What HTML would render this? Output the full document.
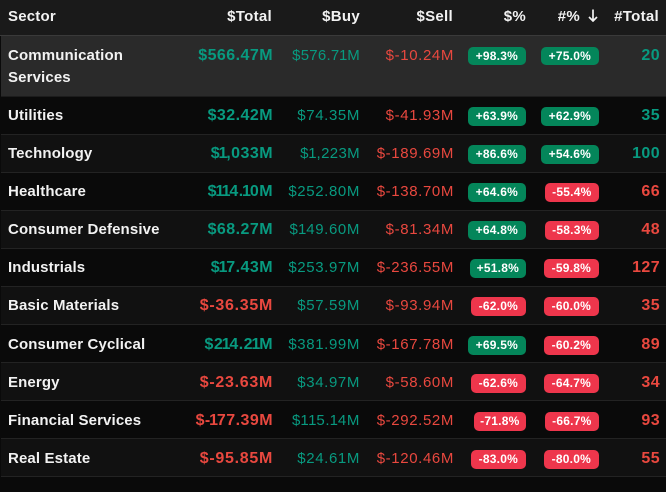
<!DOCTYPE html>
<html><head><meta charset="utf-8"><style>
html,body{margin:0;padding:0;background:#0a0a0a}
#t{position:relative;width:666px;height:492px;overflow:hidden;background:#0a0a0a;font-family:"Liberation Sans",sans-serif;font-size:15px;color:#f2f2f2}
.r{position:absolute;left:1px;right:0;height:37px;border-bottom:1px solid #232323;background:#0a0a0a}
.o{background:#111}
.r span,.h span{position:absolute;white-space:nowrap;line-height:20px;top:9px}
.l span{top:10px}
.n{left:7px;font-weight:700;letter-spacing:.13px}
.a,.b,.c,.d{text-align:right;letter-spacing:.62px}
.a{right:393px;font-weight:700;font-size:16px;letter-spacing:.45px}.b{right:306px}.c{right:212px}
.d{right:6px;font-weight:700;font-size:16px;letter-spacing:.4px}
i{font-style:normal}
.a i{margin-left:-1.6px;letter-spacing:-1.1px}
.b i{margin-left:-.5px;letter-spacing:-.1px}
.g{color:#089a80}.e{color:#e9483f}
.r span.p,.r span.q{top:10px;height:19px;line-height:19px;border-radius:5px;color:#fff;font-weight:700;font-size:12px;text-align:center;padding:0 8px;letter-spacing:.22px}
.l span.p,.l span.q{top:11px !important}
.r span.p{right:140px}.r span.q{right:67px}
.x{background:#04865a}.y{background:#ee364c}
.h{position:absolute;left:0;right:0;top:0;height:35px;background:#1a1a1a;border-bottom:1px solid #3a3a3a;font-weight:700}
.h span{top:7px;letter-spacing:.3px}
.h svg{position:absolute;left:588px;top:9px}
</style></head><body><div id="t">
<div class="h">
<span style="left:8px;letter-spacing:.2px">Sector</span>
<span style="right:394px">$Total</span>
<span style="right:306px">$Buy</span>
<span style="right:213px">$Sell</span>
<span style="right:140px">$%</span>
<span style="right:86px">#%</span>
<svg width="10" height="13" viewBox="0 0 10 13" fill="none" stroke="#f2f2f2" stroke-width="1.7"><path d="M5 0.5V12M1 8L5 12L9 8"/></svg>
<span style="right:7px">#Total</span>
</div>
<div class="r" style="top:36px;height:60px;background:#2a2a2a;border-bottom-color:#1c1c1c">
<span class="n" style="line-height:22px;top:9px">Communication<br>Services</span>
<span class="a g" style="top:10px">$566.47M</span><span class="b g" style="top:10px;letter-spacing:.25px">$576.7<i>1</i>M</span><span class="c e" style="top:10px">$-10.24M</span>
<span class="p x" style="top:11px;height:18px;line-height:18px">+98.3%</span><span class="q x" style="top:11px;height:18px;line-height:18px">+75.0%</span><span class="d g" style="top:10px">20</span></div>
<div class="r" style="top:97px"><span class="n">Utilities</span><span class="a g">$32.42M</span><span class="b g">$74.35M</span><span class="c e">$-41.93M</span><span class="p x">+63.9%</span><span class="q x">+62.9%</span><span class="d g">35</span></div>
<div class="r o" style="top:135px"><span class="n">Technology</span><span class="a g">$<i>1</i>,033M</span><span class="b g" style="letter-spacing:.35px">$<i>1</i>,223M</span><span class="c e">$-189.69M</span><span class="p x">+86.6%</span><span class="q x">+54.6%</span><span class="d g">100</span></div>
<div class="r" style="top:173px"><span class="n">Healthcare</span><span class="a g">$<i>1</i><i>1</i>4.<i>1</i>0M</span><span class="b g">$252.80M</span><span class="c e">$-138.70M</span><span class="p x">+64.6%</span><span class="q y" style="padding:0 7.5px">-55.4%</span><span class="d e">66</span></div>
<div class="r o" style="top:211px"><span class="n">Consumer Defensive</span><span class="a g">$68.27M</span><span class="b g">$<i>1</i>49.60M</span><span class="c e">$-81.34M</span><span class="p x">+64.8%</span><span class="q y" style="padding:0 7.5px">-58.3%</span><span class="d e">48</span></div>
<div class="r" style="top:249px"><span class="n">Industrials</span><span class="a g">$<i>1</i>7.43M</span><span class="b g">$253.97M</span><span class="c e">$-236.55M</span><span class="p x" style="padding:0 7px">+51.8%</span><span class="q y">-59.8%</span><span class="d e">127</span></div>
<div class="r o" style="top:287px"><span class="n">Basic Materials</span><span class="a e" style="letter-spacing:.7px">$-36.35M</span><span class="b g">$57.59M</span><span class="c e">$-93.94M</span><span class="p y">-62.0%</span><span class="q y">-60.0%</span><span class="d e">35</span></div>
<div class="r l" style="top:325px"><span class="n">Consumer Cyclical</span><span class="a g">$2<i>1</i>4.2<i>1</i>M</span><span class="b g">$381.99M</span><span class="c e">$-167.78M</span><span class="p x">+69.5%</span><span class="q y">-60.2%</span><span class="d e">89</span></div>
<div class="r o l" style="top:363px"><span class="n">Energy</span><span class="a e" style="letter-spacing:.7px">$-23.63M</span><span class="b g">$34.97M</span><span class="c e">$-58.60M</span><span class="p y">-62.6%</span><span class="q y">-64.7%</span><span class="d e">34</span></div>
<div class="r l" style="top:401px"><span class="n">Financial Services</span><span class="a e">$-<i>1</i>77.39M</span><span class="b g">$<i>1</i><i>1</i>5.<i>1</i>4M</span><span class="c e">$-292.52M</span><span class="p y" style="padding:0 6.5px">-71.8%</span><span class="q y" style="padding:0 7.5px">-66.7%</span><span class="d e">93</span></div>
<div class="r o l" style="top:439px"><span class="n">Real Estate</span><span class="a e" style="letter-spacing:.7px">$-95.85M</span><span class="b g">$24.61M</span><span class="c e">$-120.46M</span><span class="p y">-83.0%</span><span class="q y">-80.0%</span><span class="d e">55</span></div>
</div></body></html>
